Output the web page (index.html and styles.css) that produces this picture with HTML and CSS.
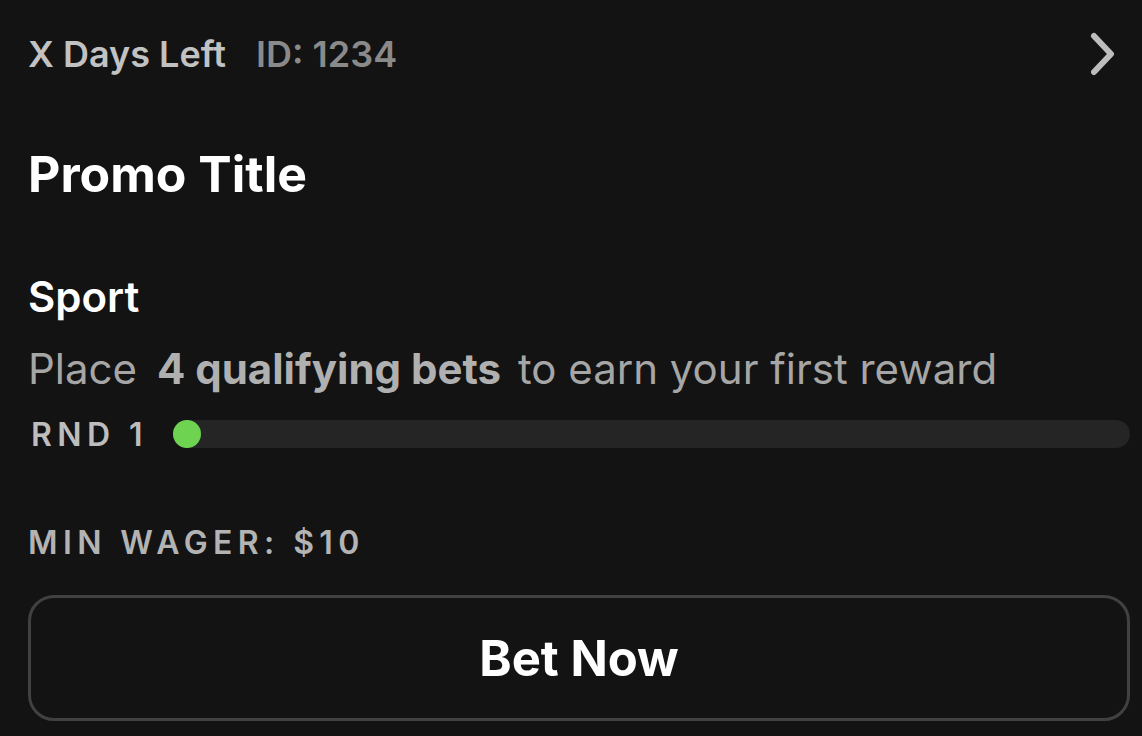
FILE: index.html
```html
<!DOCTYPE html>
<html lang="en">
<head>
  <meta charset="UTF-8" />
  <meta name="viewport" content="width=device-width, initial-scale=1.0"/>
  <title>Promo Card</title>
  <link rel="stylesheet" href="styles.css">
</head>
<body>

  <div class="promo">
    <div class="promo-top">
      <span class="days">X Days Left</span>
      <span class="promo-id">ID: 1234</span>
      <svg class="chevron" width="30" height="44" viewBox="0 0 30 44">
        <polyline points="6,4 23,22 6,40" fill="none" stroke="#bdbdbd" stroke-width="6" stroke-linecap="round" stroke-linejoin="round"/>
      </svg>
    </div>

    <h1 class="title">Promo Title</h1>

    <h2 class="sport">Sport</h2>
    <p class="desc">Place <b>4 qualifying bets</b> to earn your first reward</p>

    <div class="round">
      <span class="round-label">RND 1</span>
      <div class="track">
        <div class="dot"></div>
      </div>
    </div>

    <div class="wager">MIN WAGER: $10</div>

    <button class="bet">Bet Now</button>
  </div>

</body>
</html>
```

FILE: styles.css
```css
body {
  margin: 0;
  background: #131313;
  font-family: Inter, "Noto Sans", sans-serif;
  color: #ffffff;
}

.promo {
  padding: 30px 12px 15px 28px;
}

.promo-top {
  display: flex;
  align-items: center;
  font-size: 36px;
  line-height: 48px;
  font-weight: 600;
}

.days {
  color: #c2c2c2;
}

.promo-id {
  color: #8a8a8a;
  margin-left: 30px;
}

.chevron {
  margin-left: auto;
  margin-right: 12px;
}

.title {
  margin: 66px 0 0;
  font-size: 50px;
  line-height: 60px;
  font-weight: 700;
}

.sport {
  margin: 69px 0 0;
  font-size: 42px;
  line-height: 48px;
  font-weight: 600;
}

.desc {
  margin: 24px 0 0;
  font-size: 42px;
  line-height: 48px;
  font-weight: 400;
  color: #a6a6a6;
}

.desc b {
  font-weight: 700;
  color: #b0b0b0;
  margin-left: 8px;
  margin-right: 5px;
}

.round {
  display: flex;
  align-items: center;
  margin-top: 27px;
  height: 28px;
}

.round-label {
  font-size: 32px;
  font-weight: 600;
  letter-spacing: 5.4px;
  color: #bdbdbd;
  margin-left: 3px;
  width: 142px;
}

.track {
  flex: 1;
  height: 28px;
  border-radius: 14px;
  background: #252525;
}

.dot {
  width: 28px;
  height: 28px;
  border-radius: 50%;
  background: #6fd352;
}

.wager {
  margin-top: 75px;
  font-size: 32px;
  line-height: 40px;
  font-weight: 600;
  letter-spacing: 5.4px;
  color: #b3b3b3;
}

.bet {
  display: block;
  width: 100%;
  height: 126px;
  margin-top: 32px;
  background: transparent;
  border: 3px solid #414141;
  border-radius: 26px;
  color: #ffffff;
  font-family: Inter, "Noto Sans", sans-serif;
  font-size: 49px;
  font-weight: 700;
}
```
